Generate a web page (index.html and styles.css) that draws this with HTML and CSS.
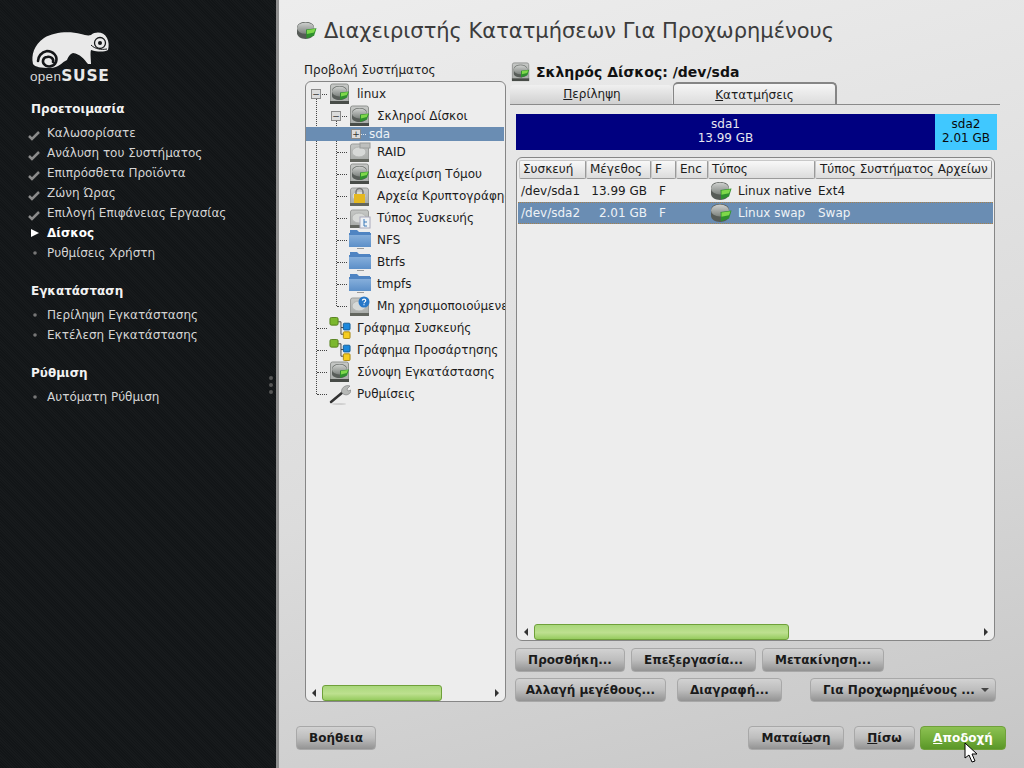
FILE: index.html
```html
<!DOCTYPE html>
<html lang="el">
<head>
<meta charset="utf-8">
<title>Διαχειριστής Κατατμήσεων</title>
<link rel="stylesheet" href="styles.css">
</head>
<body>
<svg class="defs" width="0" height="0">
  <defs>
    <linearGradient id="gd" x1="0" y1="0" x2="0" y2="1"><stop offset="0" stop-color="#cfd1cf"/><stop offset="1" stop-color="#7d827e"/></linearGradient>
    <linearGradient id="gb" x1="0" y1="0" x2="0" y2="1"><stop offset="0" stop-color="#c6c8c6"/><stop offset="1" stop-color="#a9aca9"/></linearGradient>
    <linearGradient id="gf" x1="0" y1="0" x2="0" y2="1"><stop offset="0" stop-color="#8db4de"/><stop offset="1" stop-color="#5c8fc8"/></linearGradient>
    <symbol id="disk" viewBox="0 0 22 20">
      <path d="M1 7c0-4 4-6 9-6s9 2 9 6v6c0 3-4 6-9 6s-9-3-9-6z" fill="#565b57"/>
      <ellipse cx="10" cy="7.500" rx="9" ry="6" fill="url(#gd)"/>
      <path d="M10.500 9l11-1.500-2.500 8-8 3z" fill="#2f8f2e"/>
      <path d="M11.500 9.500l9-1.300-1.500 4-7.500 1.500z" fill="#7ed84a"/>
    </symbol>
    <symbol id="hdd" viewBox="0 0 22 22">
      <path d="M1.500 3a2 2 0 0 1 2-2h14a2 2 0 0 1 2 2v16h-18z" fill="url(#gb)" stroke="#8f928f"/>
      <rect x="1" y="18" width="19" height="3" fill="#484c48"/>
      <path d="M3 8c0-3 3-5 7.500-5S18 5 18 8v5c0 2-3 4-7.500 4S3 15 3 13z" fill="#585d59"/>
      <ellipse cx="10.500" cy="8.500" rx="7.500" ry="5" fill="url(#gd)"/>
      <path d="M11 9.500l9-1-2 6-7 2.500z" fill="#2f8f2e"/>
      <path d="M12 10l7-1-1.200 3-5.800 1.500z" fill="#7ed84a"/>
    </symbol>
    <symbol id="hddplain" viewBox="0 0 22 22">
      <path d="M1.500 5a2 2 0 0 1 2-2h14a2 2 0 0 1 2 2v14h-18z" fill="url(#gb)" stroke="#9a9c9a"/>
      <rect x="1" y="18" width="19" height="3" fill="#63665f"/>
      <ellipse cx="10" cy="11" rx="7" ry="5" fill="#d7d9d7" stroke="#b3b5b3"/>
    </symbol>
    <symbol id="folder" viewBox="0 0 22 22">
      <path d="M1 1h7l2 2h11v15H1z" fill="#4f84c2"/>
      <rect x="0" y="4" width="22" height="14" fill="url(#gf)"/>
      <rect x="0" y="4" width="22" height="2" fill="#4f84c2"/>
      <rect x="8" y="19" width="7" height="1" fill="#9a9a9a"/>
    </symbol>
    <symbol id="graph" viewBox="0 0 22 23">
      <path d="M9 5h3v6h3M12 11v7h3" fill="none" stroke="#444" stroke-width="1"/>
      <rect x=".5" y=".5" width="8.500" height="8" rx="1.500" fill="#7cb82e" stroke="#557f1c"/>
      <rect x="14.500" y="6.500" width="7" height="7" rx="1" fill="#1c88dc" stroke="#135c96"/>
      <rect x="14.500" y="15.500" width="7" height="7" rx="1" fill="#f6cd20" stroke="#a88712"/>
    </symbol>
    <symbol id="tools" viewBox="0 0 22 22">
      <path d="M2 19L14 9" stroke="#333" stroke-width="2.500" stroke-linecap="round"/>
      <path d="M13 10c-2-4 3-9 8-7l-3 3 1 2 3-1c0 4-5 7-9 3z" fill="#b6b8b6" stroke="#77797a" stroke-width=".6"/>
      <ellipse cx="10" cy="21" rx="7" ry="1" fill="#cfcfcf"/>
    </symbol>
  </defs>
</svg>

<aside class="sidebar">
  <div class="logo">
    <svg class="logo-mark" viewBox="30 30 80 42" width="80" height="42" aria-hidden="true">
      <path d="M33 64c-2-9 1-19 11-26 10-6 25-7 37-4 4 1 7 2 10 1 5-4 13-3 16 3 2 4 2 8 1 12-4 2-10 2-17 0-1 3 0 9 0 14h-3c-4-5-8-10-15-11-3 1-5 4-6 7-5 2-8 8-17 8-9 0-15-1-17-4z" fill="#e9e9e9"/>
      <path d="M53 62c1-3-2-6-6-5-4 0-5 5-3 7 3 4 10 3 12-2 2-6-3-11-9-11-6 1-9 6-9 10" fill="none" stroke="#141618" stroke-width="2.600" stroke-linecap="round"/>
      <circle cx="100" cy="43" r="5.500" fill="none" stroke="#141618" stroke-width="1.300"/>
      <circle cx="100" cy="43" r="2" fill="#141618"/>
      <path d="M91 45c4 4 10 5 16 4" fill="none" stroke="#141618" stroke-width="1"/>
    </svg>
    <div class="logo-text"><span class="logo-open">open</span><span class="logo-suse">SUSE</span></div>
  </div>
  <nav class="steps">
    <h2 class="step-head">Προετοιμασία</h2>
    <ul class="step-list">
      <li class="step"><svg class="mark" viewBox="0 0 12 12"><path d="M1 7l3 3 7-7" fill="none" stroke="#8b8b8b" stroke-width="2.500"/></svg>Καλωσορίσατε</li>
      <li class="step"><svg class="mark" viewBox="0 0 12 12"><path d="M1 7l3 3 7-7" fill="none" stroke="#8b8b8b" stroke-width="2.500"/></svg>Ανάλυση του Συστήματος</li>
      <li class="step"><svg class="mark" viewBox="0 0 12 12"><path d="M1 7l3 3 7-7" fill="none" stroke="#8b8b8b" stroke-width="2.500"/></svg>Επιπρόσθετα Προϊόντα</li>
      <li class="step"><svg class="mark" viewBox="0 0 12 12"><path d="M1 7l3 3 7-7" fill="none" stroke="#8b8b8b" stroke-width="2.500"/></svg>Ζώνη Ώρας</li>
      <li class="step"><svg class="mark" viewBox="0 0 12 12"><path d="M1 7l3 3 7-7" fill="none" stroke="#8b8b8b" stroke-width="2.500"/></svg>Επιλογή Επιφάνειας Εργασίας</li>
      <li class="step current"><svg class="mark tri" viewBox="0 0 12 12"><path d="M2 2l8 4-8 4z" fill="#fff"/></svg>Δίσκος</li>
      <li class="step"><svg class="mark tri" viewBox="0 0 12 12"><circle cx="6" cy="6" r="1.800" fill="#777"/></svg>Ρυθμίσεις Χρήστη</li>
    </ul>
    <h2 class="step-head">Εγκατάσταση</h2>
    <ul class="step-list">
      <li class="step"><svg class="mark tri" viewBox="0 0 12 12"><circle cx="6" cy="6" r="1.800" fill="#777"/></svg>Περίληψη Εγκατάστασης</li>
      <li class="step"><svg class="mark tri" viewBox="0 0 12 12"><circle cx="6" cy="6" r="1.800" fill="#777"/></svg>Εκτέλεση Εγκατάστασης</li>
    </ul>
    <h2 class="step-head">Ρύθμιση</h2>
    <ul class="step-list">
      <li class="step"><svg class="mark tri" viewBox="0 0 12 12"><circle cx="6" cy="6" r="1.800" fill="#777"/></svg>Αυτόματη Ρύθμιση</li>
    </ul>
  </nav>
  <div class="grip"><i></i><i></i><i></i></div>
</aside>

<main class="main">
  <header class="title-bar">
    <svg class="title-icon"><use href="#disk"/></svg>
    <h1 class="title">Διαχειριστής Κατατμήσεων Για Προχωρημένους</h1>
  </header>

  <div class="content">
    <section class="left">
      <div class="tree-label">Προβολή Συστήματος</div>
      <div class="tree">
        <span class="vline v1"></span><span class="vline v2"></span>
        <div class="row l0"><span class="conn"><b class="exp">−</b></span><svg class="ico"><use href="#hdd"/></svg><span>linux</span></div>
        <div class="row l1"><span class="conn"><b class="exp">−</b></span><svg class="ico"><use href="#hdd"/></svg><span>Σκληροί Δίσκοι</span></div>
        <div class="row l2 selected"><span class="conn"><b class="exp">+</b></span><span>sda</span></div>
        <div class="row l1"><span class="conn"></span><svg class="ico" viewBox="0 0 22 22"><use href="#hddplain" width="22" height="22"/><rect x="11" y="2" width="10" height="5" fill="#bdbfbd" stroke="#9a9c9a"/></svg><span>RAID</span></div>
        <div class="row l1"><span class="conn"></span><svg class="ico"><use href="#hdd"/></svg><span>Διαχείριση Τόμου</span></div>
        <div class="row l1"><span class="conn"></span><svg class="ico" viewBox="0 0 22 22"><use href="#hddplain" width="22" height="22"/><path d="M7 9V7a3.500 3.500 0 0 1 7 0v2" fill="none" stroke="#777" stroke-width="1.500"/><rect x="5" y="9" width="11" height="9" fill="#e4b820"/></svg><span>Αρχεία Κρυπτογράφησης</span></div>
        <div class="row l1"><span class="conn"></span><svg class="ico" viewBox="0 0 22 22"><use href="#hddplain" width="22" height="22"/><rect x="11" y="10" width="10" height="11" fill="#eef1f5" stroke="#aab"/><path d="M15 12v7h3M15 15h3" stroke="#3b78b8" fill="none"/></svg><span>Τύπος Συσκευής</span></div>
        <div class="row l1"><span class="conn"></span><svg class="ico"><use href="#folder"/></svg><span>NFS</span></div>
        <div class="row l1"><span class="conn"></span><svg class="ico"><use href="#folder"/></svg><span>Btrfs</span></div>
        <div class="row l1"><span class="conn"></span><svg class="ico"><use href="#folder"/></svg><span>tmpfs</span></div>
        <div class="row l1"><span class="conn"></span><svg class="ico" viewBox="0 0 22 22"><use href="#hddplain" width="22" height="22"/><circle cx="15" cy="7" r="5.500" fill="#2878c8"/><path d="M13.300 5.500c.4-1.800 3.400-1.800 3.400.1 0 1.300-1.700 1.300-1.700 2.700M15 9.300v1" fill="none" stroke="#fff" stroke-width="1.200"/></svg><span>Μη χρησιμοποιούμενες Συσκευές</span></div>
        <div class="row l0"><span class="conn"></span><svg class="ico"><use href="#graph"/></svg><span>Γράφημα Συσκευής</span></div>
        <div class="row l0"><span class="conn"></span><svg class="ico"><use href="#graph"/></svg><span>Γράφημα Προσάρτησης</span></div>
        <div class="row l0"><span class="conn"></span><svg class="ico"><use href="#hdd"/></svg><span>Σύνοψη Εγκατάστασης</span></div>
        <div class="row l0"><span class="conn"></span><svg class="ico"><use href="#tools"/></svg><span>Ρυθμίσεις</span></div>
        <div class="scrollbar tree-scroll"><span class="arrow al"></span><span class="thumb"></span><span class="arrow ar"></span></div>
      </div>
    </section>

    <section class="right">
      <div class="disk-head"><svg class="ico"><use href="#hdd"/></svg><span>Σκληρός Δίσκος: /dev/sda</span></div>
      <div class="tabs">
        <div class="tab"><u>Π</u>ερίληψη</div>
        <div class="tab active"><u>Κ</u>ατατμήσεις</div>
      </div>
      <div class="bar">
        <div class="seg seg1">sda1<br>13.99 GB</div>
        <div class="seg seg2">sda2<br>2.01 GB</div>
      </div>
      <div class="table">
        <div class="grid head">
          <div class="th">Συσκευή</div><div class="th">Μέγεθος</div><div class="th">F</div><div class="th">Enc</div><div class="th">Τύπος</div><div class="th">Τύπος Συστήματος Αρχείων</div>
        </div>
        <div class="grid tr">
          <div class="td">/dev/sda1</div><div class="td num">13.99 GB</div><div class="td fmt">F</div><div class="td"></div><div class="td type"><svg class="ico-sm"><use href="#disk"/></svg>Linux native</div><div class="td">Ext4</div>
        </div>
        <div class="grid tr selected">
          <div class="td">/dev/sda2</div><div class="td num">2.01 GB</div><div class="td fmt">F</div><div class="td"></div><div class="td type"><svg class="ico-sm"><use href="#disk"/></svg>Linux swap</div><div class="td">Swap</div>
        </div>
        <div class="scrollbar table-scroll"><span class="arrow al"></span><span class="thumb"></span><span class="arrow ar"></span></div>
      </div>
      <div class="btn-row first">
        <button class="btn w-add">Προσθήκη...</button>
        <button class="btn w-edit">Επεξεργασία...</button>
        <button class="btn w-move">Μετακίνηση...</button>
      </div>
      <div class="btn-row">
        <button class="btn w-resize">Αλλαγή μεγέθους...</button>
        <button class="btn w-del">Διαγραφή...</button>
        <button class="btn w-adv">Για Προχωρημένους ... <span class="caret"></span></button>
      </div>
    </section>
  </div>

  <footer class="footer">
    <button class="btn w-help">Βοήθεια</button>
    <span class="spring"></span>
    <button class="btn w-cancel">Ματαί<u>ω</u>ση</button>
    <button class="btn w-back"><u>Π</u>ίσω</button>
    <button class="btn accept"><u>Α</u>ποδοχή</button>
  </footer>
</main>

<svg class="cursor" width="14" height="22" viewBox="0 0 14 22"><path d="M1 1v15l4-3 3 7 3-1-3-7h5z" fill="#fff" stroke="#000"/></svg>
</body>
</html>
```
FILE: styles.css
```css
* { box-sizing: border-box; }
html, body { margin: 0; height: 768px; overflow: hidden; }
body {
  display: flex;
  width: 1024px;
  position: relative;
  font: 12px/15px "DejaVu Sans", sans-serif;
  color: #1c1c1c;
}
.defs { position: absolute; }

/* sidebar */
.sidebar {
  width: 276px;
  flex: none;
  position: relative;
  background: repeating-linear-gradient(45deg, #121517 0 1px, #171a1c 1px 2px);
  color: #d4d4d4;
  padding-left: 30px;
}
.logo { height: 99px; padding-top: 30px; }
.logo-mark { display: block; margin-top: 0; }
.logo-text { display: flex; align-items: baseline; height: 14px; margin-top: -3px; color: #e9e9e9; line-height: 14px; }
.logo-open { font: 13.500px/14px "Liberation Sans", sans-serif; letter-spacing: .3px; color: #d6d6d6; }
.logo-suse { font: bold 15.500px/14px "DejaVu Sans", sans-serif; letter-spacing: .7px; }
.steps { margin-left: 1px; }
.step-head { margin: 0; font: bold 12px/20px "DejaVu Sans", sans-serif; color: #f2f2f2; }
.step-list { list-style: none; margin: 4px 0 18px; padding: 0; }
.step { height: 20px; line-height: 20px; padding-left: 16px; position: relative; white-space: nowrap; }
.step.current { font-weight: bold; color: #fff; }
.mark { position: absolute; left: -3px; top: 6px; width: 12px; height: 12px; }
.mark.tri { top: 4px; left: -2px; }
.grip { position: absolute; right: 3px; top: 376px; display: flex; flex-direction: column; gap: 3px; }
.grip i { display: block; width: 4px; height: 4px; border-radius: 50%; background: #555; }

/* main */
.main {
  flex: 1;
  min-width: 0;
  display: flex;
  flex-direction: column;
  border-left: 3px solid #8f8f8f;
  padding: 0 18px 18px 17px;
  background: linear-gradient(165deg, #ededed 0%, #dcdcdc 55%, #c6c6c6 100%);
}
.title-bar { height: 61px; display: flex; align-items: center; gap: 6px; }
.title-icon { width: 21px; height: 19px; flex: none; margin-right: 1px; }
.title { margin: 0; font: 400 21px/26px "DejaVu Sans", sans-serif; color: #3c3c3c; white-space: nowrap; }
.content { height: 641px; display: flex; }
.left { width: 210px; flex: none; padding-left: 9px; display: flex; flex-direction: column; }
.tree-label { height: 20px; line-height: 18px; margin-left: -1px; white-space: nowrap; }
.tree {
  height: 621px;
  position: relative;
  overflow: hidden;
  background: #ededed;
  border: 1px solid #868686;
  border-radius: 6px;
  display: flex;
  flex-direction: column;
  padding-top: 1px;
}
.vline { position: absolute; width: 0; border-left: 1px dotted #444; }
.v1 { left: 10px; top: 10px; height: 302px; }
.v2 { left: 30px; top: 32px; height: 192px; }
.row { height: 22px; flex: none; display: flex; align-items: center; white-space: nowrap; position: relative; }
.row.l1 { padding-left: 20px; }
.row.l2 { padding-left: 40px; height: 14px; margin-right: 1px; }
.row.selected { background: #6a8db3; color: #eef2f6; }
.conn { width: 23px; height: 100%; flex: none; position: relative; }
.conn::after { content: ""; position: absolute; left: 11px; right: 2px; top: 50%; border-top: 1px dotted #444; }
.l2 .conn::after { left: 14px; right: 3px; border-color: #dfe6ee; }
.exp {
  position: absolute; left: 5px; top: 50%; margin-top: -5px;
  width: 10px; height: 10px; z-index: 1;
  background: #dcdcdc; border: 1px solid #8a8a8a;
  font: 9px/8px "DejaVu Sans", sans-serif; text-align: center; color: #333;
}
.ico { width: 22px; height: 22px; flex: none; margin-right: 6px; }
.scrollbar { display: flex; align-items: center; position: relative; height: 17px; flex: none; }
.tree-scroll { margin-top: auto; padding-left: 16px; }
.thumb {
  display: block; height: 16px; width: 120px; flex: none;
  background: linear-gradient(#a8d77a, #bde08f 55%, #96cb5f);
  border: 1px solid #6fa03a; border-radius: 3px;
}
.arrow { position: absolute; top: 5px; width: 0; height: 0; border-top: 4px solid transparent; border-bottom: 4px solid transparent; }
.al { border-right: 4px solid #333; left: 6px; }
.ar { border-left: 4px solid #333; right: 6px; }

/* right */
.right { flex: 1; min-width: 0; display: flex; flex-direction: column; padding-left: 4px; }
.disk-head { height: 24px; display: flex; align-items: center; font: bold 14px/18px "DejaVu Sans", sans-serif; color: #111; margin-left: 1px; margin-top: -1px; flex: none; }
.disk-head .ico { width: 20px; height: 20px; margin-right: 5px; }
.tabs { display: flex; height: 21px; flex: none; border-bottom: 1px solid #8a8a8a; align-items: flex-end; margin-right: 6px; }
.tab {
  width: 162px; height: 19px; text-align: center; line-height: 18px; padding-left: 2px;
  background: linear-gradient(#f0f0f0, #d0d0d0);
  border-radius: 4px 4px 0 0;
}
.tab.active {
  width: 164px; margin-left: 1px; height: 22px; line-height: 20px; padding: 1px 0 0;
  background: linear-gradient(#f6f6f6, #dcdcdc);
  border: 2px solid #858585; border-bottom: 0; border-left-width: 1px;
  border-radius: 5px 5px 0 0;
}
.bar { display: flex; height: 36px; flex: none; margin: 9px 9px 0 6px; text-align: center; line-height: 14px; }
.seg { padding-top: 3px; }
.seg1 { flex: 1; background: #000080; color: #e6e6f0; }
.seg2 { width: 62px; background: #40c8ff; color: #0a0a0a; }
.table {
  height: 484px; flex: none; margin: 7px 11px 0 6px;
  background: #ededed; border: 1px solid #868686; border-radius: 6px;
  display: flex; flex-direction: column; padding: 2px 0 0 1px; position: relative;
}
.grid { display: grid; grid-template-columns: 67px 65px 25px 32px 107px 177px; }
.head { margin-left: 1px; height: 19px; }
.th {
  height: 19px; line-height: 17px; padding-left: 3px;
  background: linear-gradient(#f8f8f8, #dcdcdc);
  border: 1px solid #9a9a9a; border-top-color: #c8c8c8; border-left-color: #c8c8c8;
  border-radius: 2px; white-space: nowrap; overflow: hidden;
}
.th:last-child { padding-left: 4px; }
.tr { height: 22px; margin-right: 1px; align-items: center; }
.head + .tr { margin-top: 1px; }
.tr.selected { background: #6a8db3; color: #eef2f6; border-top: 1px dotted #a8814a; border-bottom: 1px dotted #a8814a; }
.td { padding-left: 3px; white-space: nowrap; }
.num { text-align: right; padding: 0 3px 0 0; }
.fmt { padding-left: 9px; }
.type { display: flex; align-items: center; padding-left: 3px; }
.ico-sm { width: 22px; height: 20px; margin-right: 6px; flex: none; }
.td:last-child { padding-left: 4px; }
.table-scroll { margin-top: auto; padding-left: 16px; }
.table-scroll .thumb { width: 255px; }

.btn-row { display: flex; height: 24px; flex: none; margin: 6px 0 0 5px; gap: 6px; }
.btn-row.first { margin-top: 7px; }
.btn {
  height: 24px; padding: 0; margin: 0;
  font: bold 12px/20px "DejaVu Sans", sans-serif; color: #1a1a1a;
  background: linear-gradient(#d2d2d2, #bdbdbd 50%, #939393);
  border: 1px solid #a8a8a8; border-radius: 4px;
  white-space: nowrap;
}
.w-add { width: 110px; }
.w-edit { width: 125px; }
.w-move { width: 122px; }
.w-resize { width: 151px; }
.w-del { width: 105px; margin-left: 5px; }
.w-adv { width: 186px; margin-left: 22px; padding-left: 6px; }
.caret { display: inline-block; vertical-align: 2px; margin-left: 2px; border-left: 4px solid transparent; border-right: 4px solid transparent; border-top: 4px solid #444; }

.footer { display: flex; height: 24px; flex: none; margin-top: 24px; gap: 10px; }
.spring { flex: 1; }
.w-help { width: 80px; }
.w-cancel { width: 96px; }
.w-back { width: 61px; }
.accept { width: 86px; margin-left: -5px; color: #fff; background: linear-gradient(#8cc152, #74ae3c 50%, #5a9628); border-color: #6fa03a; }
.cursor { position: absolute; left: 964px; top: 742px; }
```
